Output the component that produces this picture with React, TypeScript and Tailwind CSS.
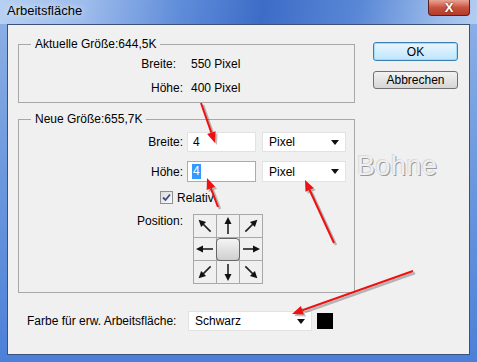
import React from "react";

const font = { fontFamily: '"Liberation Sans", Arial, sans-serif' };

type Pt = [number, number];

// rote Pfeile der Anmerkung
function headPoints(tail: Pt, tip: Pt, len = 11, half = 4.5) {
  const dx = tip[0] - tail[0];
  const dy = tip[1] - tail[1];
  const d = Math.hypot(dx, dy);
  const ux = dx / d;
  const uy = dy / d;
  const bx = tip[0] - ux * len;
  const by = tip[1] - uy * len;
  return {
    base: [bx, by] as Pt,
    pts: `${tip[0]},${tip[1]} ${bx - uy * half},${by + ux * half} ${bx + uy * half},${by - ux * half}`,
  };
}

function RedArrow({ tail, tip }: { tail: Pt; tip: Pt }) {
  const h = headPoints(tail, tip);
  return (
    <g>
      <g opacity={0.25} transform="translate(2,2)">
        <line x1={tail[0]} y1={tail[1]} x2={h.base[0]} y2={h.base[1]} stroke="#000" strokeWidth={2.5} />
        <polygon points={h.pts} fill="#000" />
      </g>
      <line x1={tail[0]} y1={tail[1]} x2={h.base[0]} y2={h.base[1]} stroke="#f01010" strokeWidth={2} />
      <polygon points={h.pts} fill="#f01010" />
    </g>
  );
}

function Caret() {
  return (
    <svg width="8" height="5" viewBox="0 0 8 5" className="shrink-0">
      <polygon points="0,0 8,0 4,5" fill="#111" />
    </svg>
  );
}

function Select({ value, className }: { value: string; className: string }) {
  return (
    <div
      className={`flex items-center justify-between bg-white border border-[#e2e2e2] pl-[6px] pr-[6px] text-[12px] text-black ${className}`}
    >
      <span>{value}</span>
      <Caret />
    </div>
  );
}

// Pfeil im Positionsraster, Winkel in Grad (0 = nach oben)
function GridArrow({ angle }: { angle: number }) {
  return (
    <svg width="22" height="22" viewBox="0 0 22 22">
      <g transform={`rotate(${angle} 11 11)`}>
        <line x1="11" y1="19" x2="11" y2="8" stroke="#222" strokeWidth="1.6" />
        <polygon points="11,2 7.5,9 14.5,9" fill="#111" />
      </g>
    </svg>
  );
}

function PositionGrid() {
  const angles: (number | null)[] = [-45, 0, 45, -90, null, 90, -135, 180, 135];
  return (
    <div className="grid grid-cols-[23px_23px_23px] grid-rows-[23px_23px_23px] border-l border-t border-[#a8a8a8] w-[70px] h-[70px]">
      {angles.map((a, i) => (
        <div
          key={i}
          className="flex items-center justify-center border-r border-b border-[#a8a8a8] bg-[#f0f0f0]"
        >
          {a === null ? (
            <div className="w-[24px] h-[23px] -m-[1px] rounded-[4px] border border-[#666] bg-gradient-to-b from-[#f4f4f4] to-[#cfcfcf]" />
          ) : (
            <GridArrow angle={a} />
          )}
        </div>
      ))}
    </div>
  );
}

export default function App() {
  return (
    <div
      className="relative w-[477px] h-[362px] overflow-hidden bg-gradient-to-b from-[#8fb2e6] via-[#6b97dd] to-[#4c80d8] flex flex-col"
      style={font}
    >
      {/* Titelleiste */}
      <div className="h-[24px] shrink-0 relative flex items-start bg-[linear-gradient(100deg,#b7d0f2_0%,#9dbcec_18%,#5f8cd9_38%,#3d6cc7_55%,#5a88d6_75%,#9bbbea_92%,#b4cdf1_100%)]">
        <span className="ml-[7px] mt-[3px] text-[13px] leading-[16px] text-black [text-shadow:0_0_6px_rgba(255,255,255,0.9)]">
          Arbeitsfläche
        </span>
        <div className="absolute left-[428px] top-0 w-[42px] h-[16px] rounded-b-[4px] border border-t-0 border-[#5a2020] bg-gradient-to-b from-[#e8a595] via-[#c9523f] to-[#b33b2a] flex items-center justify-center">
          <span className="text-white text-[13px] font-bold leading-none [text-shadow:0_0_2px_#5a1a10]">X</span>
        </div>
      </div>

      {/* Inhalt */}
      <div className="mx-[7px] mb-[7px] flex-1 border border-[#3c5078] bg-[#f0f0f0] flex flex-col text-[12px] text-black">
        <div className="flex pl-[10px] pt-[12px]">
          <div className="w-[337px] flex flex-col">
            <fieldset className="border border-[#a8a8a8] px-0 pt-[6px] pb-[7px]">
              <legend className="ml-[12px] px-[4px] leading-[14px]">Aktuelle Größe:644,5K</legend>
              <div className="flex flex-col gap-[10px] leading-[14px]">
                <div className="flex">
                  <span className="w-[157px] text-right">Breite:</span>
                  <span className="ml-[15px]">550 Pixel</span>
                </div>
                <div className="flex">
                  <span className="w-[164px] text-right">Höhe:</span>
                  <span className="ml-[8px]">400 Pixel</span>
                </div>
              </div>
            </fieldset>

            <fieldset className="mt-[9px] border border-[#a8a8a8] px-0 pt-[6px] pb-[8px]">
              <legend className="ml-[12px] px-[4px] leading-[14px]">Neue Größe:655,7K</legend>
              <div className="flex flex-col">
                <div className="flex items-center h-[20px]">
                  <span className="w-[164px] text-right">Breite:</span>
                  <div className="ml-[4px] w-[69px] h-[20px] bg-white border border-[#e2e2e2] pl-[5px] flex items-center">4</div>
                  <Select value="Pixel" className="ml-[6px] w-[84px] h-[20px]" />
                </div>
                <div className="flex items-center h-[21px] mt-[9px]">
                  <span className="w-[164px] text-right">Höhe:</span>
                  <div className="ml-[4px] w-[69px] h-[21px] bg-white border border-[#8fb1d9] pl-[4px] flex items-center">
                    <span className="bg-[#3399ff] text-white px-[1px] leading-[15px]">4</span>
                  </div>
                  <Select value="Pixel" className="ml-[6px] w-[84px] h-[21px]" />
                </div>
                <div className="flex items-center h-[13px] mt-[9px] pl-[141px]">
                  <div className="w-[13px] h-[13px] border border-[#8e8f8f] bg-gradient-to-br from-[#dcdcdc] to-[#fafafa] flex items-center justify-center">
                    <svg width="9" height="9" viewBox="0 0 9 9">
                      <path d="M1 4.5 L3.5 7 L8 1.5" fill="none" stroke="#3b4c80" strokeWidth="1.8" />
                    </svg>
                  </div>
                  <span className="ml-[4px] leading-[14px]">Relativ</span>
                </div>
                <div className="flex items-start mt-[10px]">
                  <span className="w-[164px] text-right leading-[14px]">Position:</span>
                  <div className="ml-[10px]">
                    <PositionGrid />
                  </div>
                </div>
              </div>
            </fieldset>
          </div>

          <div className="ml-[18px] pt-[5px] flex flex-col gap-[10px]">
            <div className="w-[85px] h-[19px] rounded-[3px] border border-[#3c7fb1] bg-gradient-to-b from-[#eaf6fd] to-[#bee6fd] flex items-center justify-center shadow-[inset_0_0_0_1px_#9fdcfb]">
              OK
            </div>
            <div className="w-[85px] h-[18px] rounded-[3px] border border-[#707070] bg-gradient-to-b from-[#f2f2f2] to-[#d5d5d5] flex items-center justify-center">
              Abbrechen
            </div>
          </div>
        </div>

        <div className="flex items-center mt-[18px] pl-[19px]">
          <span className="w-[161px]">Farbe für erw. Arbeitsfläche:</span>
          <Select value="Schwarz" className="w-[124px] h-[20px]" />
          <div className="ml-[5px] w-[16px] h-[16px] bg-black" />
        </div>
      </div>

      {/* Wasserzeichen */}
      <span className="absolute left-[357px] top-[151px] text-[27px] leading-[30px] text-[#efefef] [text-shadow:1px_1px_0_#9a9a9a,-1px_-1px_0_#dadada] tracking-[0.5px]">
        Bohne
      </span>

      {/* Anmerkungspfeile */}
      <svg className="absolute inset-0 pointer-events-none" width="477" height="362">
        <RedArrow tail={[201, 103]} tip={[215, 143]} />
        <RedArrow tail={[218, 207]} tip={[207, 178]} />
        <RedArrow tail={[334, 243]} tip={[305, 180]} />
        <RedArrow tail={[413, 271]} tip={[292, 314]} />
      </svg>
    </div>
  );
}
